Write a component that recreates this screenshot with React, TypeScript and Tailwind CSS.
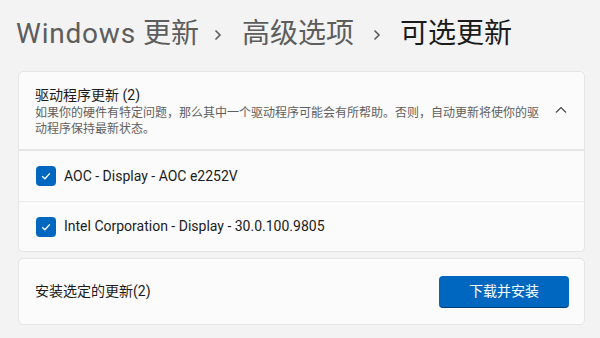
import React, { useState } from "react";

const font = "font-['Roboto','Noto_Sans_CJK_SC',sans-serif]";

const drivers = [
  { id: 1, name: "AOC - Display - AOC e2252V" },
  { id: 2, name: "Intel Corporation - Display - 30.0.100.9805" },
];

const Crumb: React.FC<{ className: string }> = ({ className }) => (
  <svg width="8" height="12" viewBox="0 0 8 12" className={`mt-[2px] ${className}`}>
    <path d="M1.5 1.5 L6 6 L1.5 10.5" fill="none" stroke="#5d5d5d" strokeWidth="1.6" />
  </svg>
);

const CheckBox: React.FC<{ checked: boolean; onClick: () => void }> = ({ checked, onClick }) => (
  <button
    onClick={onClick}
    className={`w-[20px] h-[20px] rounded-[4px] flex items-center justify-center shrink-0 ${
      checked ? "bg-[#0067c0]" : "bg-white border border-[#8a8a8a]"
    }`}
  >
    {checked && (
      <svg width="12" height="12" viewBox="0 0 12 12">
        <path d="M2.2 6.2 L4.9 8.8 L9.8 3.4" fill="none" stroke="white" strokeWidth="1.3" />
      </svg>
    )}
  </button>
);

export default function App() {
  const [checked, setChecked] = useState<number[]>([1, 2]);

  const toggle = (id: number) =>
    setChecked((c) => (c.includes(id) ? c.filter((x) => x !== id) : [...c, id]));

  return (
    <div className={`w-[600px] h-[338px] overflow-hidden bg-[#f3f3f3] ${font}`}>
      {/* breadcrumb */}
      <div className="h-[71px] pl-[16px] pt-[14px]">
        <div className="flex items-center h-[40px] text-[28px] leading-[40px]">
          <span className="text-[#5d5d5d]">
            <span className="tracking-[0.8px]">Windows</span> 更新
          </span>
          <Crumb className="ml-[15px] mr-[20px]" />
          <span className="text-[#5d5d5d]">高级选项</span>
          <Crumb className="ml-[19px] mr-[19px]" />
          <span className="text-[#1b1b1b]">可选更新</span>
        </div>
      </div>

      {/* drivers expander */}
      <div className="ml-[18px] mr-[15px]">
        <div className="h-[79px] rounded-t-[5px] border border-[#e5e5e5] bg-[#fbfbfb] pl-[16px] pr-[17px] flex items-center justify-between">
          <div className="w-[512px]">
            <div className="text-[14px] leading-[20px] text-[#1b1b1b]">驱动程序更新 (2)</div>
            <div className="text-[12px] leading-[16px] text-[#606060]">
              如果你的硬件有特定问题，那么其中一个驱动程序可能会有所帮助。否则，自动更新将使你的驱动程序保持最新状态。
            </div>
          </div>
          <svg width="12" height="8" viewBox="0 0 12 8" className="mb-[2px]">
            <path d="M1 6.5 L6 1.5 L11 6.5" fill="none" stroke="#444" strokeWidth="1.1" />
          </svg>
        </div>
        <div className="rounded-b-[5px] border border-t-0 border-[#e5e5e5] bg-[#fbfbfb]">
          <div className="h-[1px] bg-[#e5e5e5]" />
          {drivers.map((d, i) => (
            <div
              key={d.id}
              className={`h-[50px] pl-[17px] flex items-center gap-[8px] ${
                i > 0 ? "border-t border-[#ececec]" : ""
              }`}
            >
              <CheckBox checked={checked.includes(d.id)} onClick={() => toggle(d.id)} />
              <span className="text-[14px] text-[#1b1b1b]">{d.name}</span>
            </div>
          ))}
        </div>

        {/* install bar */}
        <div className="mt-[6px] h-[67px] rounded-[5px] border border-[#e5e5e5] bg-[#fbfbfb] pl-[16px] pr-[15px] flex items-center justify-between">
          <span className="text-[14px] text-[#1b1b1b]">安装选定的更新({checked.length})</span>
          <button className="w-[130px] h-[32px] rounded-[4px] bg-[#0067c0] border-b border-[#003e73] text-white text-[14px]">
            下载并安装
          </button>
        </div>
      </div>
    </div>
  );
}
